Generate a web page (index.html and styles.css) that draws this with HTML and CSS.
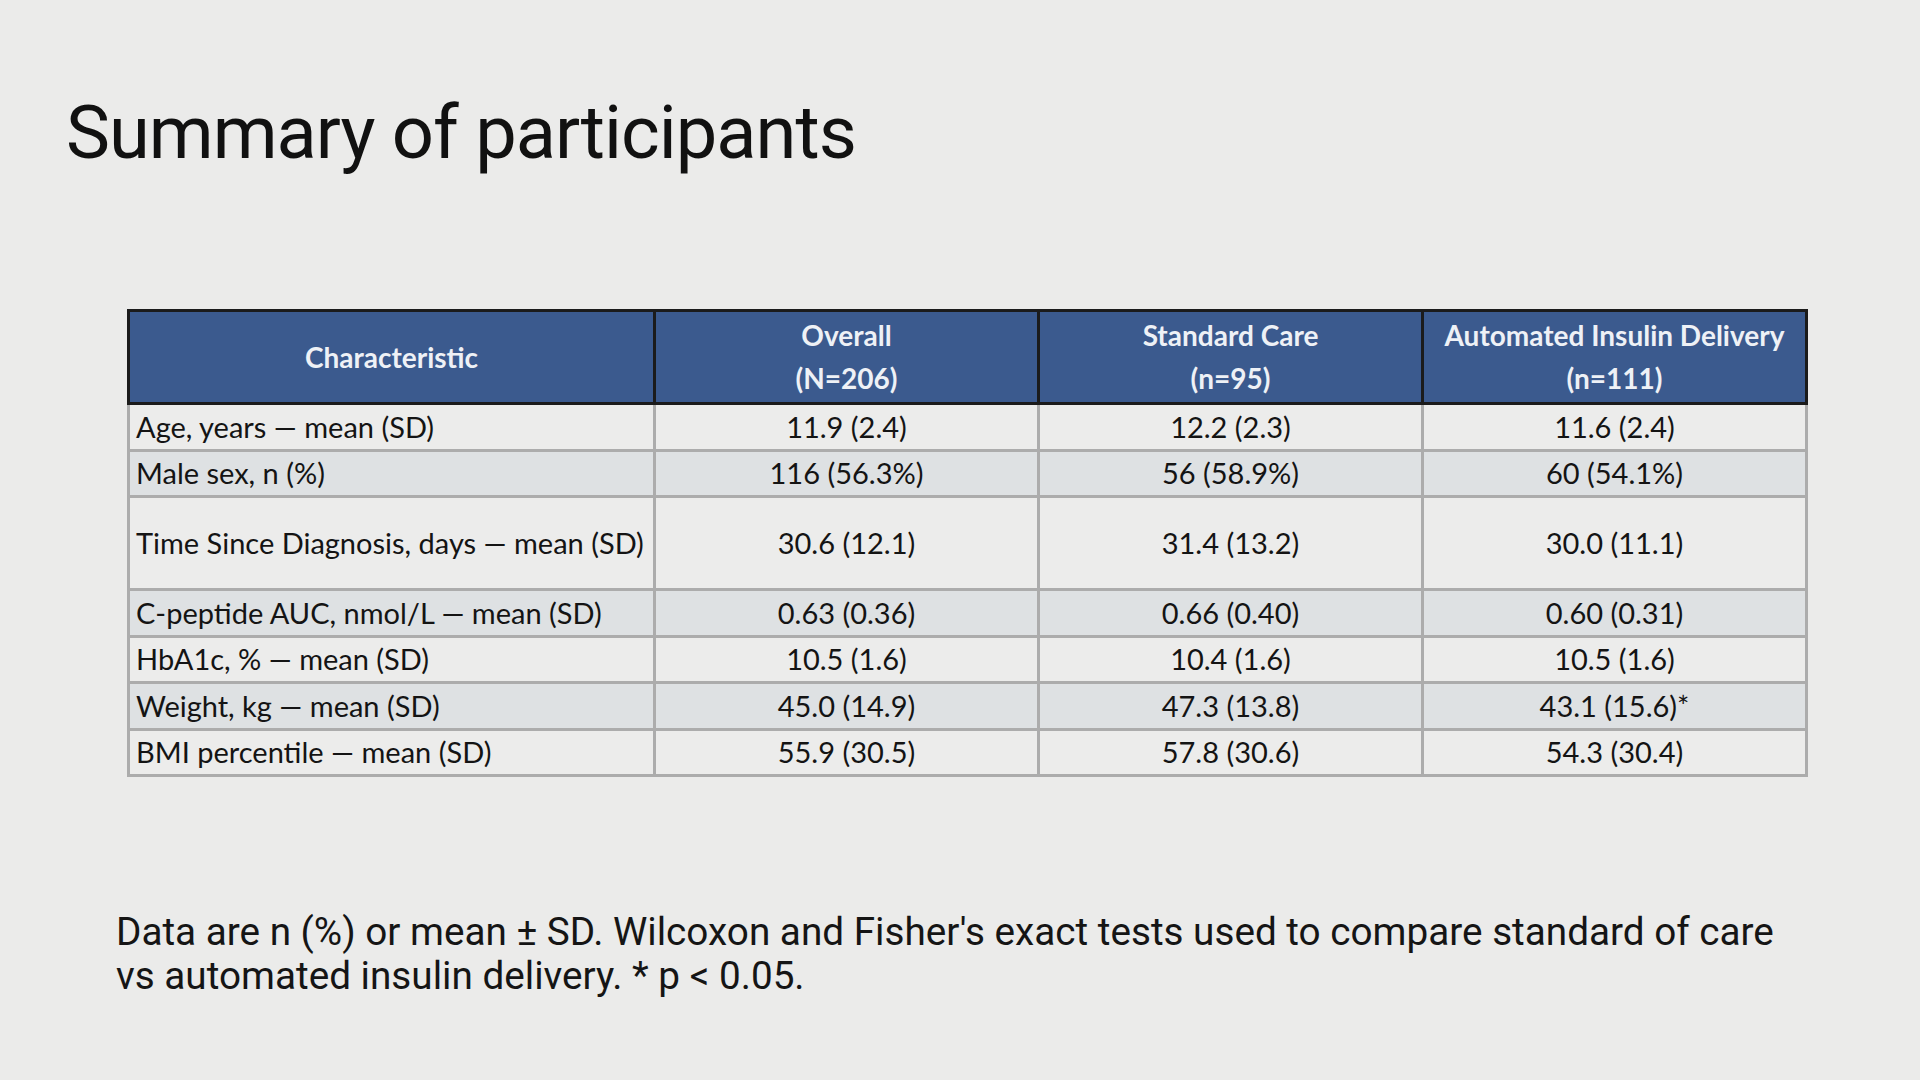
FILE: index.html
```html
<!DOCTYPE html>
<html lang="en">
<head>
<meta charset="utf-8">
<title>Summary of participants</title>
<link rel="stylesheet" href="styles.css">
</head>
<body>
<main class="slide">
  <h1 class="title">Summary of participants</h1>
  <table class="summary">
    <colgroup>
      <col class="c-char">
      <col class="c-num">
      <col class="c-num">
      <col class="c-num">
    </colgroup>
    <thead>
      <tr>
        <th>Characteristic</th>
        <th>Overall<br>(N=206)</th>
        <th>Standard Care<br>(n=95)</th>
        <th>Automated Insulin Delivery<br>(n=111)</th>
      </tr>
    </thead>
    <tbody>
      <tr class="light">
        <td>Age, years — mean (SD)</td>
        <td>11.9 (2.4)</td>
        <td>12.2 (2.3)</td>
        <td>11.6 (2.4)</td>
      </tr>
      <tr class="shade">
        <td>Male sex, n (%)</td>
        <td>116 (56.3%)</td>
        <td>56 (58.9%)</td>
        <td>60 (54.1%)</td>
      </tr>
      <tr class="light tall">
        <td>Time Since Diagnosis, days — mean (SD)</td>
        <td>30.6 (12.1)</td>
        <td>31.4 (13.2)</td>
        <td>30.0 (11.1)</td>
      </tr>
      <tr class="shade">
        <td>C-peptide AUC, nmol/L — mean (SD)</td>
        <td>0.63 (0.36)</td>
        <td>0.66 (0.40)</td>
        <td>0.60 (0.31)</td>
      </tr>
      <tr class="light">
        <td>HbA1c, % — mean (SD)</td>
        <td>10.5 (1.6)</td>
        <td>10.4 (1.6)</td>
        <td>10.5 (1.6)</td>
      </tr>
      <tr class="shade">
        <td>Weight, kg — mean (SD)</td>
        <td>45.0 (14.9)</td>
        <td>47.3 (13.8)</td>
        <td>43.1 (15.6)*</td>
      </tr>
      <tr class="light">
        <td>BMI percentile — mean (SD)</td>
        <td>55.9 (30.5)</td>
        <td>57.8 (30.6)</td>
        <td>54.3 (30.4)</td>
      </tr>
    </tbody>
  </table>
  <p class="note">Data are n (%) or mean ± SD. Wilcoxon and Fisher's exact tests used to compare standard of care<br>vs automated insulin delivery. * p &lt; 0.05.</p>
</main>
</body>
</html>
```
FILE: styles.css
```css
html, body {
  margin: 0;
  padding: 0;
  background: #ebebea;
}

.slide {
  width: 1920px;
  height: 1080px;
  box-sizing: border-box;
  display: flex;
  flex-direction: column;
  align-items: flex-start;
  padding-top: 96px;
  overflow: hidden;
}

.title {
  margin: 0 0 0 66px;
  font-family: Roboto, "Liberation Sans", sans-serif;
  font-weight: 400;
  font-size: 74px;
  line-height: 74px;
  letter-spacing: -1px;
  color: #111111;
}

.summary {
  margin: 139px 0 0 127px;
  border-collapse: collapse;
  table-layout: fixed;
  width: 1680px;
  font-family: Lato, "Liberation Sans", sans-serif;
  font-size: 29px;
  color: #141414;
}

.c-char { width: 526px; }
.c-num { width: 384px; }

.summary th {
  background: #3b5a8e;
  color: #eef1f6;
  font-weight: 700;
  font-size: 28px;
  line-height: 43px;
  height: 90px;
  padding: 0;
  border: 3px solid #1b1b1b;
  text-align: center;
  vertical-align: middle;
}

.summary td {
  height: 43.5px;
  padding: 0;
  border: 3px solid #acacac;
  text-align: center;
  vertical-align: middle;
  line-height: 40px;
}

.summary td:first-child {
  text-align: left;
  padding-left: 6px;
}

.summary tr.tall td {
  height: 90px;
}

.summary tr.light td { background: #ececeb; }
.summary tr.shade td { background: #dee1e3; }

.note {
  margin: 133px 0 0 116px;
  font-family: Roboto, "Liberation Sans", sans-serif;
  font-size: 38.7px;
  line-height: 44px;
  color: #151515;
}
```
